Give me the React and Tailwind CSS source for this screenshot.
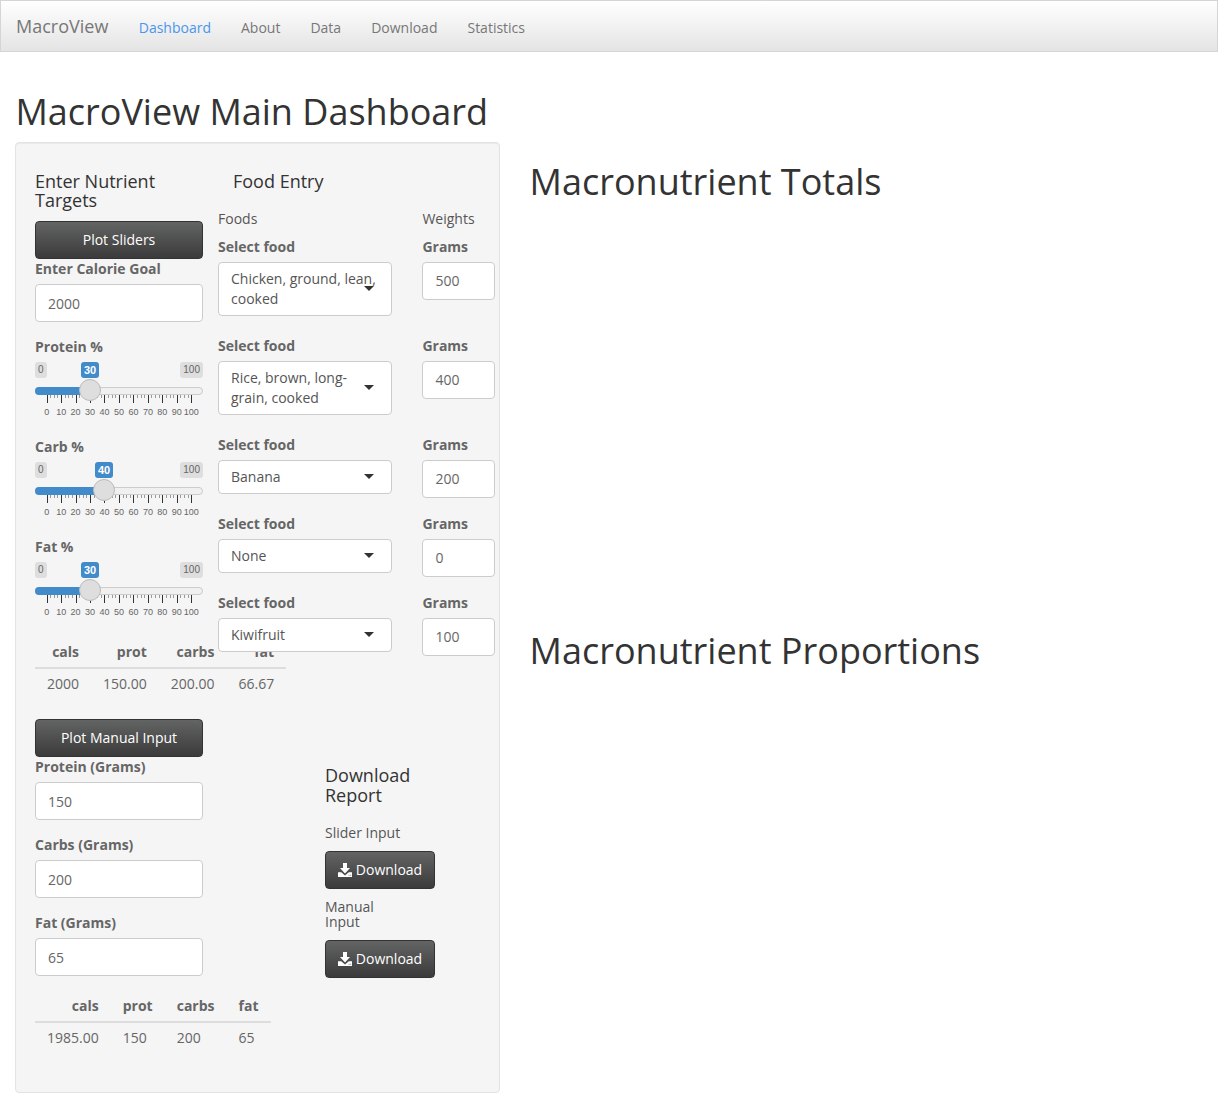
const FONT = "font-['Open_Sans',sans-serif]";

function TextBox({ value, low }) {
  return (
    <div
      className={
        "flex h-[38px] w-full items-center rounded-[4px] border border-[#ccc] bg-white px-3 text-[14px] leading-5 text-[#666] " +
        (low ? "pt-[2px]" : "")
      }
    >
      {value}
    </div>
  );
}

function Label({ children }) {
  return <div className="mb-[5px] h-5 text-[14px] font-bold leading-5 text-[#666]">{children}</div>;
}

function Field({ label, value, low, className = "" }) {
  return (
    <div className={className}>
      <Label>{label}</Label>
      <TextBox value={value} low={low} />
    </div>
  );
}

function DarkButton({ children, className = "" }) {
  return (
    <button
      type="button"
      className={
        "flex h-[38px] items-center justify-center rounded-[4px] border border-[#333] bg-gradient-to-b from-[#636464] to-[#3b3b3b] text-[14px] leading-5 text-white " +
        className
      }
    >
      {children}
    </button>
  );
}

function DownloadIcon() {
  return (
    <svg width="14" height="14" viewBox="0 0 14 14" className="mr-1 shrink-0" fill="#fff">
      <path d="M5 0h4v5h3l-5 5.5L2 5h3z" />
      <path d="M0 9.2h3.2L7 12.4l3.8-3.2H14V14H0z" />
      <rect x="10.6" y="11.8" width="1" height="1" fill="#888" />
      <rect x="12.2" y="11.8" width="1" height="1" fill="#888" />
    </svg>
  );
}

const TICKS = [0, 10, 20, 30, 40, 50, 60, 70, 80, 90, 100];

function Slider({ value }) {
  const handle = Math.floor(55 + (value - 30) * 1.45);
  return (
    <div className="relative mb-[15px] h-[60px] w-[168px] font-['Liberation_Sans',sans-serif]">
      <span className="absolute left-0 top-0 rounded-[3px] bg-[#dedede] px-[3px] text-[10px] leading-4 text-[#666]">0</span>
      <span className="absolute right-0 top-0 rounded-[3px] bg-[#dedede] px-[3px] text-[10px] leading-4 text-[#666]">100</span>
      <span
        className="absolute top-0 w-[18px] rounded-[3px] bg-[#428bca] text-center text-[11px] font-bold leading-4 text-white"
        style={{ left: handle - 9 }}
      >
        {value}
      </span>
      <div className="absolute left-0 top-[25px] h-2 w-full rounded-[4px] border border-[#ccc] bg-[#f0f0f0]" />
      <div className="absolute left-0 top-[25px] h-2 rounded-l-[4px] bg-[#428bca]" style={{ width: handle }} />
      <svg className="absolute left-0 top-[33px]" width="168" height="11">
        {Array.from({ length: 41 }, (_, i) => {
          const x = Math.round(11.6 + i * 3.615) + 0.5;
          const major = i % 4 === 0;
          return <line key={i} x1={x} x2={x} y1="0" y2={major ? 8 : 3} stroke={major ? "#333" : "#999"} strokeWidth="1" />;
        })}
      </svg>
      {TICKS.map((t, i) => (
        <span
          key={t}
          className="absolute top-[44px] w-6 text-center text-[9px] leading-3 text-[#666]"
          style={{ left: 11.7 + i * 14.46 - 12 }}
        >
          {t}
        </span>
      ))}
      <div
        className="absolute top-[17px] h-[22px] w-[22px] rounded-full border border-[#bbb] bg-[#dedede]"
        style={{ left: handle - 11 }}
      />
    </div>
  );
}

function Group({ label, value }) {
  return (
    <div>
      <Label>{label}</Label>
      <Slider value={value} />
    </div>
  );
}

function DataTable({ headers, row, alignRight }) {
  return (
    <table className="relative border-collapse text-[14px] leading-5 text-[#666]">
      <thead>
        <tr className="border-b-2 border-[#ddd]">
          {headers.map((h, i) => (
            <th key={h} className={"px-3 py-[5px] font-bold " + (alignRight || i === 0 ? "text-right" : "text-left")}>
              {h}
            </th>
          ))}
        </tr>
      </thead>
      <tbody>
        <tr>
          {row.map((c, i) => (
            <td key={i} className={"px-3 py-[5px] " + (alignRight || i === 0 ? "text-right" : "text-left")}>
              {c}
            </td>
          ))}
        </tr>
      </tbody>
    </table>
  );
}

function FoodRow({ text, grams }) {
  return (
    <>
      <div>
        <Label>Select food</Label>
        <div className="relative z-10 mb-1 rounded-[4px] border border-[#ccc] bg-white px-3 py-[6px] text-[14px] leading-5 text-[#555]">
          <span className="block">{text}</span>
          <span className="absolute right-[17px] top-1/2 mt-[-3px] h-0 w-0 border-x-[5px] border-t-[5px] border-x-transparent border-t-[#333]" />
        </div>
      </div>
      <Field label="Grams" value={grams} />
    </>
  );
}

export default function App() {
  return (
    <div className={FONT + " min-h-[1113px] bg-white text-[14px] leading-5 text-[#555]"}>
      <nav className="mb-10 flex h-[52px] items-center border border-[#d5d5d5] bg-gradient-to-b from-white to-[#e4e4e4] pl-[15px] text-[14px] text-[#777]">
        <span className="mr-[30.4px] text-[18px] leading-5">MacroView</span>
        <div className="flex gap-[30px] pt-[3px]">
          <span className="text-[#4a96ee]">Dashboard</span>
          <span>About</span>
          <span>Data</span>
          <span>Download</span>
          <span>Statistics</span>
        </div>
      </nav>

      <div className="px-[15px]">
        <h1 className="mb-[10px] h-10 pl-[0.4px] text-[36px] font-normal leading-10 text-[#333]">MacroView Main Dashboard</h1>
        <div className="flex gap-[29.6px]">
          <div className="h-[951px] w-[485px] shrink-0 rounded-[4px] border border-[#e3e3e3] bg-[#f5f5f5] px-[19px] pb-[19px] pt-[28px] shadow-[inset_0_1px_1px_rgba(0,0,0,0.05)]">
            <div className="flex gap-[15px]">
              <div className="w-[168px] shrink-0">
                <h4 className="mb-[11px] mt-px text-[18px] font-normal leading-[19px] text-[#333]">Enter Nutrient Targets</h4>
                <DarkButton className="w-full">Plot Sliders</DarkButton>
                <Field label="Enter Calorie Goal" value="2000" low className="mb-[15px]" />
                <Group label="Protein %" value={30} />
                <Group label="Carb %" value={40} />
                <Group label="Fat %" value={30} />
                <DataTable alignRight headers={["cals", "prot", "carbs", "fat"]} row={["2000", "150.00", "200.00", "66.67"]} />
              </div>
              <div className="w-[277px] shrink-0">
                <h4 className="ml-[15px] text-[18px] font-normal leading-[20px] text-[#333]">Food Entry</h4>
                <div className="grid grid-cols-[174px_73px] gap-x-[30.4px] gap-y-4">
                  <div className="-mb-2 mt-[18px]">Foods</div>
                  <div className="-mb-2 mt-[18px]">Weights</div>
                  <FoodRow text="Chicken, ground, lean, cooked" grams="500" />
                  <FoodRow text="Rice, brown, long-grain, cooked" grams="400" />
                  <FoodRow text="Banana" grams="200" />
                  <FoodRow text="None" grams="0" />
                  <FoodRow text="Kiwifruit" grams="100" />
                </div>
              </div>
            </div>

            <div className="mt-5 flex gap-[122px]">
              <div className="w-[168px] shrink-0">
                <DarkButton className="w-full">Plot Manual Input</DarkButton>
                <Field label="Protein (Grams)" value="150" low className="mb-[15px]" />
                <Field label="Carbs (Grams)" value="200" low className="mb-[15px]" />
                <Field label="Fat (Grams)" value="65" low className="mb-[15px]" />
                <DataTable headers={["cals", "prot", "carbs", "fat"]} row={["1985.00", "150", "200", "65"]} />
              </div>
              <div className="w-[110px] shrink-0 pt-[46px]">
                <h4 className="text-[18px] font-normal leading-[20px] text-[#333]">Download Report</h4>
                <div className="mt-[18px]">Slider Input</div>
                <DarkButton className="mt-2 w-[110px]">
                  <DownloadIcon />
                  Download
                </DarkButton>
                <div className="mt-[10px] w-[60px] leading-[15px]">Manual Input</div>
                <DarkButton className="mt-[11px] w-[110px]">
                  <DownloadIcon />
                  Download
                </DarkButton>
              </div>
            </div>
          </div>

          <div className="min-w-0 flex-1 pt-5">
            <h2 className="h-10 text-[36px] font-normal leading-10 text-[#333]">Macronutrient Totals</h2>
            <div className="h-[400px]" />
            <h2 className="mt-[29px] h-10 text-[36px] font-normal leading-10 text-[#333]">Macronutrient Proportions</h2>
          </div>
        </div>
      </div>
    </div>
  );
}
